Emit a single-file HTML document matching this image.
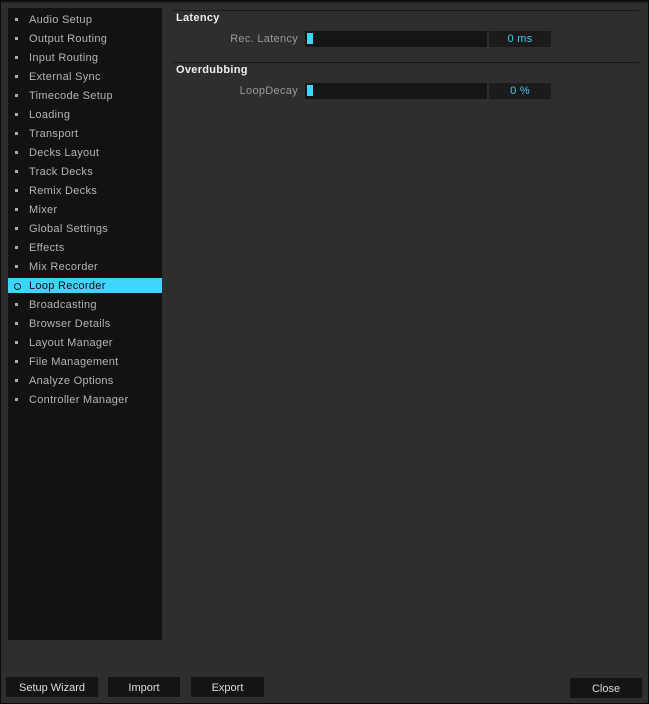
<!DOCTYPE html>
<html><head><style>
*{margin:0;padding:0;box-sizing:border-box}
body{width:649px;height:704px;background:#2e2e2e;position:relative;overflow:hidden;font-family:"Liberation Sans",sans-serif;font-size:11px;letter-spacing:0.3px}
.abs{position:absolute}
#side{left:8px;top:8px;width:154px;height:632px;background:#121212}
.it{position:absolute;left:0;width:154px;height:15px;line-height:17px;color:#b4b4b4;padding-left:21px}
.it:before{content:"";position:absolute;left:7px;top:6px;width:3px;height:3px;background:#aaa}
.sel{background:#3fd4fc;color:#111}
.sel:before{background:none;border:1px solid #222;border-radius:50%;width:5px;height:5px;left:6px;top:5px}
.hl{height:1px;background:#1a1a1a;left:173px;width:466px}
.h{color:#eee;font-weight:bold;left:176px;font-size:11px}
.lab{color:#9a9a9a;text-align:right;width:140px;left:158px}
.bar{left:305px;width:182px;height:16px;background:#151515}
.knob{left:307px;width:6px;height:11px;background:#3fd4fc}
.val{left:489px;width:62px;height:16px;background:#1b1b1b;color:#40c8f0;text-align:center;line-height:17px}
.btn{background:#141414;color:#ddd;text-align:center;line-height:22px;height:20px;font-size:11px;letter-spacing:0}
</style></head><body>
<div class="abs" style="left:0;top:0;width:649px;height:1px;background:#0a0a0a"></div>
<div class="abs" style="left:0;top:703px;width:649px;height:1px;background:#0a0a0a"></div>
<div class="abs" style="left:0;top:0;width:1px;height:704px;background:#0a0a0a"></div>
<div class="abs" style="left:648px;top:0;width:1px;height:704px;background:#0a0a0a"></div>
<div class="abs" style="left:1px;top:1px;width:647px;height:2px;background:#1c1c1c"></div>
<div id="side" class="abs">
<div class="it" style="top:4px">Audio Setup</div>
<div class="it" style="top:23px">Output Routing</div>
<div class="it" style="top:42px">Input Routing</div>
<div class="it" style="top:61px">External Sync</div>
<div class="it" style="top:80px">Timecode Setup</div>
<div class="it" style="top:99px">Loading</div>
<div class="it" style="top:118px">Transport</div>
<div class="it" style="top:137px">Decks Layout</div>
<div class="it" style="top:156px">Track Decks</div>
<div class="it" style="top:175px">Remix Decks</div>
<div class="it" style="top:194px">Mixer</div>
<div class="it" style="top:213px">Global Settings</div>
<div class="it" style="top:232px">Effects</div>
<div class="it" style="top:251px">Mix Recorder</div>
<div class="it sel" style="top:270px">Loop Recorder</div>
<div class="it" style="top:289px">Broadcasting</div>
<div class="it" style="top:308px">Browser Details</div>
<div class="it" style="top:327px">Layout Manager</div>
<div class="it" style="top:346px">File Management</div>
<div class="it" style="top:365px">Analyze Options</div>
<div class="it" style="top:384px">Controller Manager</div>
</div>
<div class="abs hl" style="top:10px"></div>
<div class="abs h" style="top:12px">Latency</div>
<div class="abs lab" style="top:33px">Rec. Latency</div>
<div class="abs bar" style="top:31px"></div>
<div class="abs knob" style="top:33px"></div>
<div class="abs val" style="top:31px">0 ms</div>
<div class="abs hl" style="top:62px"></div>
<div class="abs h" style="top:64px">Overdubbing</div>
<div class="abs lab" style="top:85px">LoopDecay</div>
<div class="abs bar" style="top:83px"></div>
<div class="abs knob" style="top:85px"></div>
<div class="abs val" style="top:83px">0 %</div>
<div class="abs btn" style="left:6px;top:677px;width:92px">Setup Wizard</div>
<div class="abs btn" style="left:108px;top:677px;width:72px">Import</div>
<div class="abs btn" style="left:191px;top:677px;width:73px">Export</div>
<div class="abs btn" style="left:570px;top:678px;width:72px">Close</div>
</body></html>
